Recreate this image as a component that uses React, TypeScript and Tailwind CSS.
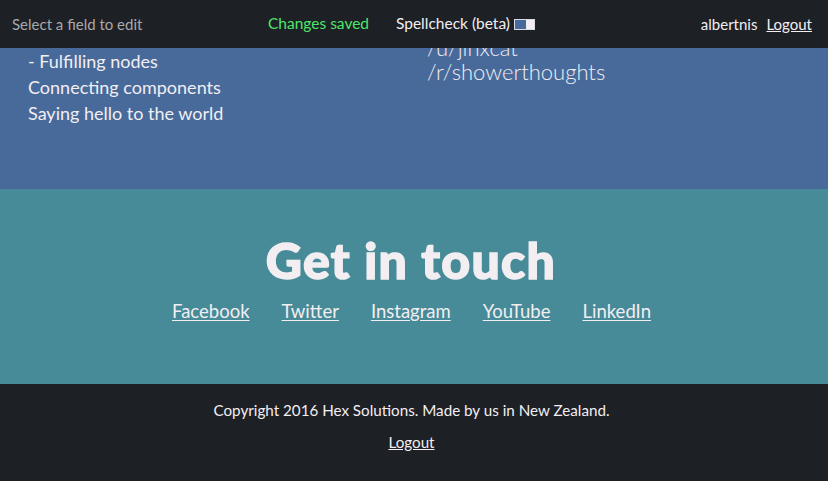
import React from 'react';

const sans = { fontFamily: 'Lato, "Noto Sans", sans-serif' };

const socialLinks = ['Facebook', 'Twitter', 'Instagram', 'YouTube', 'LinkedIn'];

const TopBar: React.FC = () => (
  <header className="fixed top-0 left-0 right-0 z-10 h-[48px] bg-[#1d2025] flex items-center pl-3 pr-4 text-[15px]">
    <span className="text-[#a9a9ab] w-[256px]">Select a field to edit</span>
    <span className="text-[#4ee66a] w-[128px] text-[15.5px]">Changes saved</span>
    <label className="flex items-center gap-[4px] text-[#f2eef2] text-[15.5px]">
      Spellcheck (beta)
      {/* toggle */}
      <span className="flex w-[21px] h-[11px] border border-[#d7dce6] bg-[#476a9a] justify-end">
        <span className="w-[8px] h-full bg-[#f2eef2]" />
      </span>
    </label>
    <div className="ml-auto flex items-center gap-[9px] text-[#f2eef2]">
      <span>albertnis</span>
      <a href="#" className="underline">Logout</a>
    </div>
  </header>
);

export default function App() {
  return (
    <div className="min-h-screen bg-[#1d2025] text-[#f2eef2]" style={sans}>
      <TopBar />

      {/* About section (scrolled, partly under the bar) */}
      <section className="h-[189px] bg-[#476a9a] grid grid-cols-2 px-[28px]">
        <div className="pt-[48px] text-[18px] leading-[26px]">
          <p>- Fulfilling nodes</p>
          <p>Connecting components</p>
          <p>Saying hello to the world</p>
        </div>
        <div className="pt-[36px] pl-[385px] -ml-[372px] text-[22px] leading-[24px] font-light whitespace-nowrap">
          <p>/u/jinxcat</p>
          <p>/r/showerthoughts</p>
        </div>
      </section>

      {/* Contact */}
      <section className="h-[195px] bg-[#468b97] flex flex-col items-center pt-[46px]">
        <h2 className="text-[50px] leading-none font-black tracking-[1.3px] [-webkit-text-stroke:1.5px_#f2eef2] pr-[6px]">
          Get in touch
        </h2>
        <nav className="mt-[12px] flex gap-[32px] text-[18.5px] leading-[28px] pr-[5px]">
          {socialLinks.map((name) => (
            <a key={name} href="#" className="underline underline-offset-2">
              {name}
            </a>
          ))}
        </nav>
      </section>

      {/* Footer */}
      <footer className="flex flex-col items-center pt-[14px] text-[15.2px] pr-[5px]">
        <p className="leading-[24px]">Copyright 2016 Hex Solutions. Made by us in New Zealand.</p>
        <a href="#" className="mt-[8px] leading-[24px] underline">Logout</a>
      </footer>
    </div>
  );
}
